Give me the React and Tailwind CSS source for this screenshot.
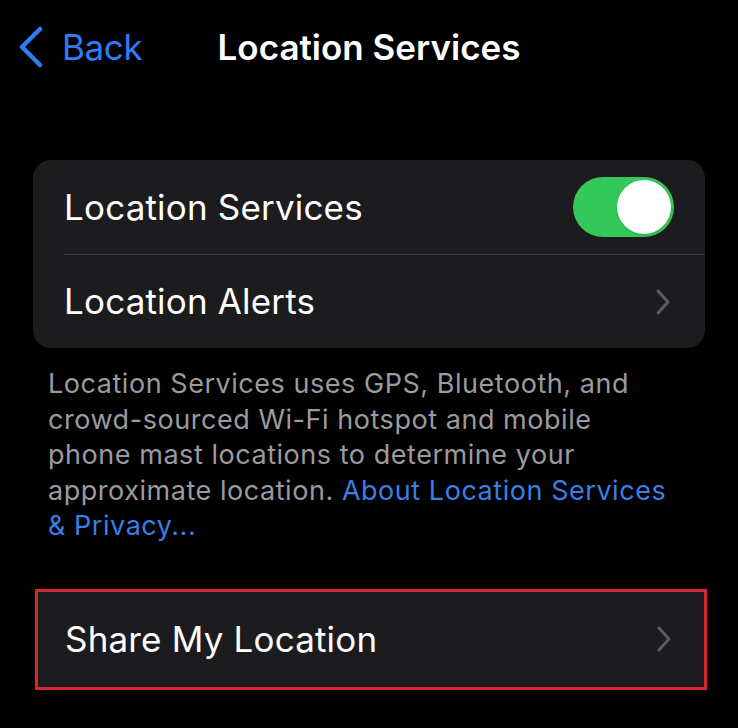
import React from 'react'

function Chevron() {
  return (
    <svg width="16" height="28" viewBox="0 0 16 28" fill="none" className="shrink-0">
      <path d="M3 3l10 11L3 25" stroke="#5b5b60" strokeWidth="3" strokeLinecap="round" strokeLinejoin="round" />
    </svg>
  )
}

function Toggle() {
  return (
    <div className="w-[101px] h-[60px] rounded-full bg-[#34c759] p-[3px] flex justify-end">
      <div className="w-[54px] h-[54px] rounded-full bg-white shadow" />
    </div>
  )
}

export default function App() {
  return (
    <div className="min-h-[728px] w-[738px] bg-black text-white font-['Inter',sans-serif] overflow-hidden">
      {/* Nav bar */}
      <header className="grid grid-cols-[1fr_auto_1fr] items-center h-[96px] px-[18px] pb-[2px]">
        <div className="flex items-center gap-[18px] text-[#2f7cf6]">
          <svg width="26" height="42" viewBox="0 0 26 42" fill="none">
            <path d="M22 3L4 21l18 18" stroke="#2f7cf6" strokeWidth="4.5" strokeLinecap="round" strokeLinejoin="round" />
          </svg>
          <span className="text-[35px] leading-none tracking-[-0.01em]">Back</span>
        </div>
        <h1 className="text-[35px] leading-none font-semibold">Location Services</h1>
        <div />
      </header>

      <main className="px-[33px] pt-[64px]">
        <section className="bg-[#1c1c1e] rounded-[18px] overflow-hidden">
          <div className="flex items-center justify-between h-[94px] pl-[31px] pr-[31px]">
            <span className="text-[35px] tracking-[0.005em]">Location Services</span>
            <Toggle />
          </div>
          <div className="ml-[31px] h-px bg-[#3a3a3c]" />
          <div className="flex items-center justify-between h-[93px] pl-[31px] pr-[34px]">
            <span className="text-[35px] tracking-[0.005em]">Location Alerts</span>
            <Chevron />
          </div>
        </section>

        {/* Footer note */}
        <p className="pl-[15px] pr-[29px] pt-[18px] text-[27px] leading-[35.5px] tracking-[0.02em]">
          <span className="text-[#9a9a9f]">
            Location Services uses GPS, Bluetooth, and crowd-sourced Wi-Fi hotspot and mobile phone mast locations to determine your approximate location.{' '}
          </span>
          <span className="text-[#3a7fe6]">About Location Services &amp; Privacy...</span>
        </p>

        <section className="mt-[45px] ml-[2px] mr-[-2px] border-[3px] border-[#d32a30] bg-[#1c1c1e]">
          <div className="flex items-center justify-between h-[95px] pl-[27px] pr-[32px]">
            <span className="text-[35px] tracking-[0.005em]">Share My Location</span>
            <Chevron />
          </div>
        </section>
      </main>
    </div>
  )
}
